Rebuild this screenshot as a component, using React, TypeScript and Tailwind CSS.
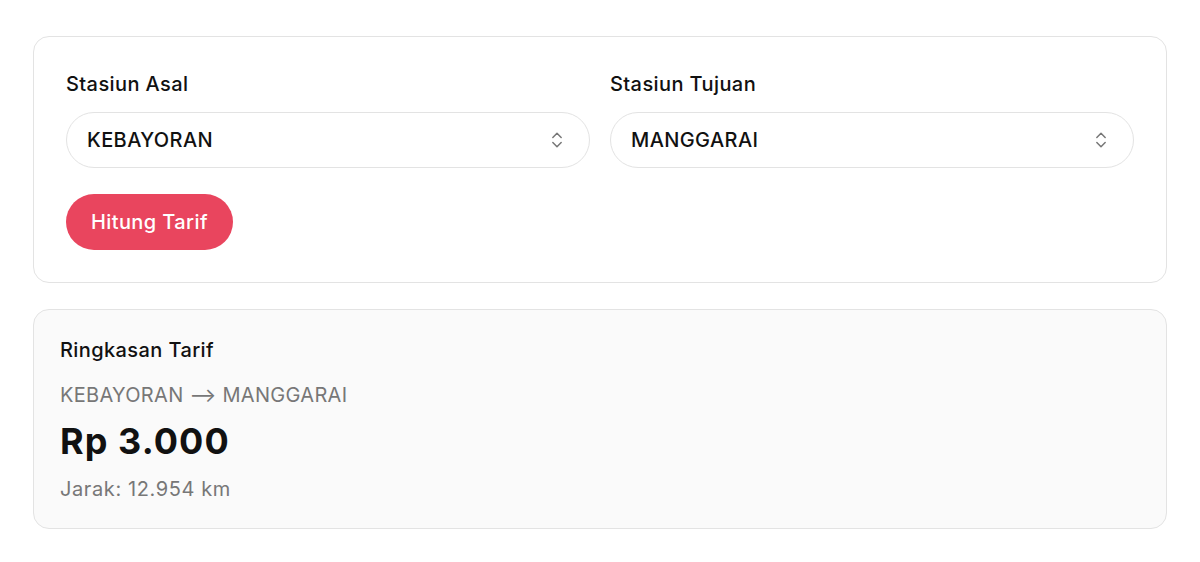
import { ChevronsUpDown } from "lucide-react";

const StationSelect = ({ label, value }: { label: string; value: string }) => {
  return (
    <div className="flex flex-col">
      <p className="text-[20px] leading-7 font-medium tracking-[0.02em] text-[#111] mb-[14px]">{label}</p>
      <div className="flex items-center justify-between h-[56px] rounded-full border border-[#e3e3e3] bg-white pl-5 pr-[22px]">
        <span className="text-[20px] font-medium tracking-[0.02em] text-[#111]">{value}</span>
        <ChevronsUpDown className="w-5 h-5 text-[#777]" strokeWidth={1.8} />
      </div>
    </div>
  );
};

const App = () => {
  return (
    <div
      className="min-h-screen bg-white px-[33px] pt-9"
      style={{ fontFamily: "Inter, 'Noto Sans', sans-serif" }}
    >
      <div className="rounded-2xl border border-[#e3e3e3] bg-white px-8 pt-[33px] pb-8">
        <div className="grid grid-cols-2 gap-5">
          <StationSelect label="Stasiun Asal" value="KEBAYORAN" />
          <StationSelect label="Stasiun Tujuan" value="MANGGARAI" />
        </div>
        <button className="mt-[26px] h-[56px] rounded-full bg-[#e9455e] px-[25px] text-[20px] font-medium tracking-[0.02em] text-white">
          Hitung Tarif
        </button>
      </div>

      <div className="mt-[26px] rounded-2xl border border-[#e3e3e3] bg-[#fafafa] px-[26px] pt-[26px] pb-[25px]">
        <p className="text-[20px] leading-7 font-medium tracking-[0.02em] text-[#111]">Ringkasan Tarif</p>
        <p className="mt-[17px] text-[20px] leading-7 tracking-[0.015em] text-[#777]">
          KEBAYORAN ⟶ MANGGARAI
        </p>
        <p className="mt-[10px] text-[36px] leading-[44px] font-bold tracking-[0.03em] text-[#111]">Rp 3.000</p>
        <p className="mt-[12px] text-[20px] leading-7 tracking-[0.03em] text-[#777]">Jarak: 12.954 km</p>
      </div>
    </div>
  );
};

export default App;
